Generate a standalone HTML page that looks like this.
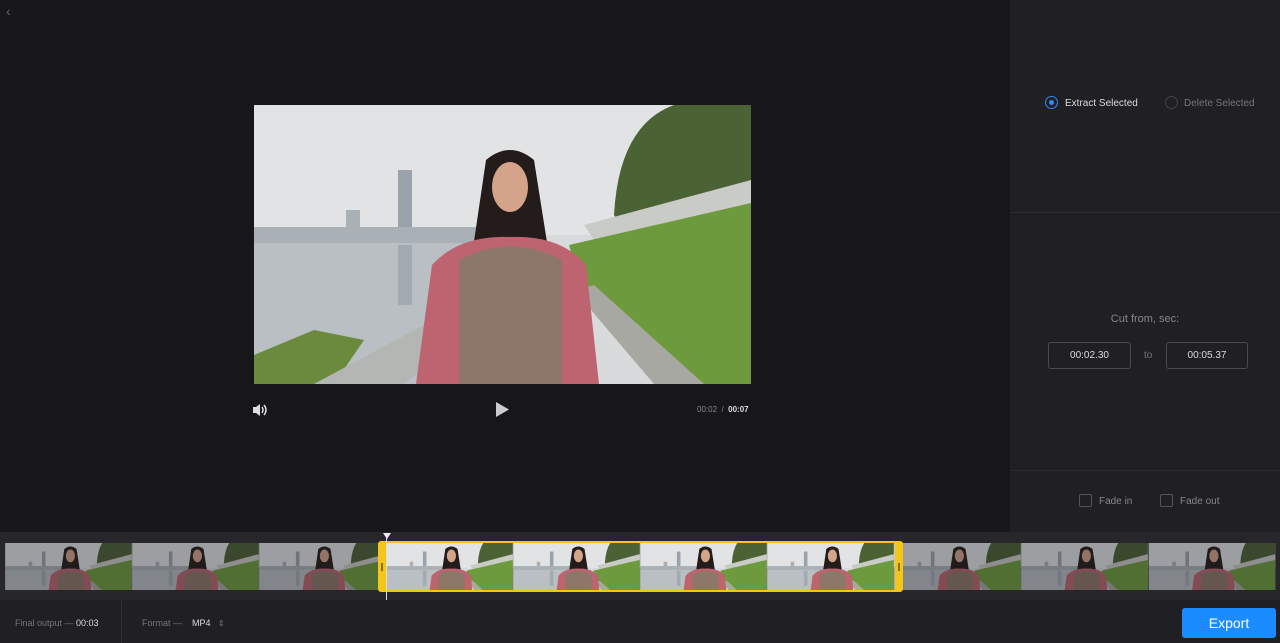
<!DOCTYPE html>
<html><head><meta charset="utf-8"><style>
*{margin:0;padding:0;box-sizing:border-box}
body{width:1280px;height:643px;background:#16161b;font-family:"Liberation Sans",sans-serif;position:relative;overflow:hidden;color:#ccc}
.abs{position:absolute}
.rp{left:1010px;top:0;width:270px;height:532px;background:#1f1f24}
.txt{font-size:10px}
.box{border:1px solid #4a4a50;border-radius:3px;background:#1f1f24;color:#ddd;font-size:10px;text-align:center;line-height:25px}
.thumbs svg{position:absolute;top:0}
</style></head><body>
<svg width="0" height="0" style="position:absolute">
<defs>
<symbol id="sc" viewBox="0 0 497 279">
<rect width="497" height="279" fill="#d8dadc"/>
<rect x="0" y="0" width="497" height="130" fill="#e2e3e5"/>
<rect x="144" y="65" width="14" height="65" fill="#9aa3ab"/>
<rect x="92" y="105" width="14" height="25" fill="#a9b0b6"/>
<rect x="0" y="122" width="230" height="16" fill="#aab1b6"/>
<rect x="0" y="138" width="220" height="141" fill="#b9bfc3"/>
<rect x="144" y="140" width="14" height="60" fill="#a3abb2"/>
<path d="M0 279 L0 250 L60 225 L110 235 L80 279Z" fill="#6c8a3e"/>
<path d="M60 279 L170 220 L210 230 L150 279Z" fill="#b4b6b3"/>
<path d="M360 110 Q365 20 420 0 L497 0 L497 80 L370 125Z" fill="#4b6234"/>
<path d="M330 120 L497 75 L497 100 L340 135Z" fill="#c9cbc7"/>
<path d="M315 140 L497 98 L497 279 L450 279 L330 190Z" fill="#6d9a3c"/>
<path d="M320 185 L400 279 L450 279 L340 180Z" fill="#a8a8a2"/>
<path d="M232 55 Q256 35 280 55 L295 150 L218 150Z" fill="#241c1a"/>
<ellipse cx="256" cy="82" rx="18" ry="25" fill="#d4a48a"/>
<path d="M162 279 L178 160 Q205 130 256 132 Q307 130 332 160 L345 279Z" fill="#bd6470"/>
<path d="M205 279 L205 155 Q256 128 308 155 L308 279Z" fill="#8d7769"/>
</symbol>
</defs>
</svg>

<div class="abs" style="left:6px;top:3px;color:#666;font-size:14px">‹</div>

<svg class="abs" style="left:254px;top:105px" width="497" height="279"><use href="#sc" width="497" height="279"/></svg>

<svg class="abs" style="left:252px;top:403px" width="16" height="14" viewBox="0 0 16 14"><path d="M1 4h3l4-3v12l-4-3H1z" fill="#ddd"/><path d="M10 4q2 3 0 6M12 2q4 5 0 10" stroke="#ddd" stroke-width="1.5" fill="none"/></svg>
<svg class="abs" style="left:496px;top:402px" width="13" height="15"><path d="M0 0L13 7.5L0 15Z" fill="#ccc"/></svg>
<div class="abs" style="left:697px;top:405px;font-size:8px;color:#888">00:02 &nbsp;/&nbsp; <b style="color:#ddd">00:07</b></div>

<div class="abs rp">
<div class="abs" style="left:0;top:212px;width:270px;height:1px;background:#2b2b31"></div>
<div class="abs" style="left:0;top:470px;width:270px;height:1px;background:#2b2b31"></div>
<div class="abs" style="left:35px;top:96px;width:13px;height:13px;border:1.5px solid #2f8cf0;border-radius:50%"><div style="margin:2.5px;width:5px;height:5px;border-radius:50%;background:#2f8cf0"></div></div>
<div class="abs txt" style="left:55px;top:98px;color:#ddd">Extract Selected</div>
<div class="abs" style="left:155px;top:96px;width:13px;height:13px;border:1px solid #444;border-radius:50%"></div>
<div class="abs txt" style="left:174px;top:98px;color:#777">Delete Selected</div>
<div class="abs" style="left:0;top:313px;width:270px;text-align:center;font-size:11px;color:#888">Cut from, sec:</div>
<div class="abs box" style="left:38px;top:342px;width:83px;height:27px">00:02.30</div>
<div class="abs txt" style="left:134px;top:350px;color:#777">to</div>
<div class="abs box" style="left:156px;top:342px;width:82px;height:27px">00:05.37</div>
<div class="abs" style="left:69px;top:494px;width:13px;height:13px;border:1px solid #555;border-radius:2px"></div>
<div class="abs txt" style="left:89px;top:496px;color:#888">Fade in</div>
<div class="abs" style="left:150px;top:494px;width:13px;height:13px;border:1px solid #555;border-radius:2px"></div>
<div class="abs txt" style="left:170px;top:496px;color:#888">Fade out</div>
</div>

<div class="abs" style="left:0;top:532px;width:1280px;height:68px;background:#26262b"></div>
<div class="abs thumbs" style="left:5px;top:543px;width:1271px;height:47px;overflow:hidden">
<svg style="left:0" width="127" height="47"><use href="#sc" width="127" height="71" y="-8"/></svg>
<svg style="left:127px" width="127" height="47"><use href="#sc" width="127" height="71" y="-8"/></svg>
<svg style="left:254px" width="127" height="47"><use href="#sc" width="127" height="71" y="-8"/></svg>
<svg style="left:381px" width="127" height="47"><use href="#sc" width="127" height="71" y="-8"/></svg>
<svg style="left:508px" width="127" height="47"><use href="#sc" width="127" height="71" y="-8"/></svg>
<svg style="left:635px" width="127" height="47"><use href="#sc" width="127" height="71" y="-8"/></svg>
<svg style="left:762px" width="127" height="47"><use href="#sc" width="127" height="71" y="-8"/></svg>
<svg style="left:889px" width="127" height="47"><use href="#sc" width="127" height="71" y="-8"/></svg>
<svg style="left:1016px" width="127" height="47"><use href="#sc" width="127" height="71" y="-8"/></svg>
<svg style="left:1143px" width="128" height="47"><use href="#sc" width="128" height="71" y="-8"/></svg>
</div>
<div class="abs" style="left:5px;top:543px;width:373px;height:47px;background:rgba(30,30,35,.35)"></div>
<div class="abs" style="left:903px;top:543px;width:373px;height:47px;background:rgba(30,30,35,.35)"></div>
<div class="abs" style="left:378px;top:541px;width:525px;height:51px;border:2px solid #f5c518;border-left:8px solid #f5c518;border-right:8px solid #f5c518;border-radius:3px"></div>
<div class="abs" style="left:381px;top:563px;width:2px;height:8px;background:#8a6d00"></div>
<div class="abs" style="left:898px;top:563px;width:2px;height:8px;background:#8a6d00"></div>
<div class="abs" style="left:386px;top:537px;width:1px;height:63px;background:#ddd"></div>
<svg class="abs" style="left:383px;top:533px" width="8" height="6"><path d="M0 0H8L4 6Z" fill="#eee"/></svg>

<div class="abs" style="left:0;top:600px;width:1280px;height:43px;background:#1f1f24"></div>
<div class="abs" style="left:121px;top:600px;width:1px;height:43px;background:#2f2f35"></div>
<div class="abs" style="left:15px;top:618px;font-size:9px;color:#777">Final output — <span style="color:#ddd">00:03</span></div>
<div class="abs" style="left:142px;top:618px;font-size:9px;color:#777">Format — &nbsp;&nbsp;&nbsp;<span style="color:#ddd">MP4</span> &nbsp;&nbsp;<span style="font-size:8px">⇕</span></div>
<div class="abs" style="left:1182px;top:608px;width:94px;height:30px;background:#1a8cff;border-radius:3px;color:#fff;font-size:14px;text-align:center;line-height:30px">Export</div>
</body></html>
